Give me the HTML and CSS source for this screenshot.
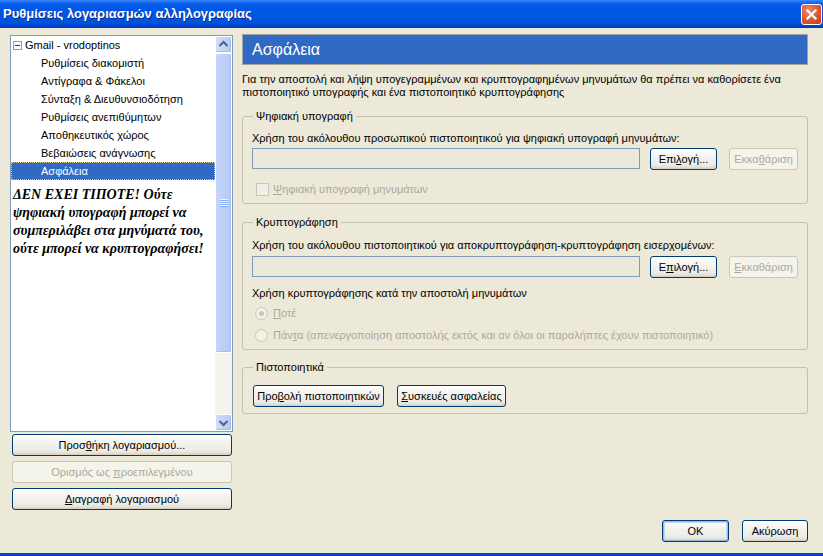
FILE: index.html
```html
<!DOCTYPE html>
<html lang="el">
<head>
<meta charset="utf-8">
<title>Ρυθμίσεις λογαριασμών αλληλογραφίας</title>
<link rel="stylesheet" href="styles.css">
</head>
<body>
<div class="window">
  <div class="titlebar">
    <span class="title">Ρυθμίσεις λογαριασμών αλληλογραφίας</span>
    <span class="close-btn">
      <svg width="19" height="19" viewBox="0 0 19 19"><path d="M5.5 5.5 L13.5 13.5 M13.5 5.5 L5.5 13.5" stroke="#fff" stroke-width="2.2" stroke-linecap="square"/></svg>
    </span>
  </div>
  <div class="content">
    <div class="main">
      <div class="leftcol">
        <div class="tree">
          <div class="tree-list">
            <div class="row root"><span class="expander"><span class="minus"></span></span>Gmail - vrodoptinos</div>
            <div class="row child">Ρυθμίσεις διακομιστή</div>
            <div class="row child">Αντίγραφα &amp; Φάκελοι</div>
            <div class="row child">Σύνταξη &amp; Διευθυνσιοδότηση</div>
            <div class="row child">Ρυθμίσεις ανεπιθύμητων</div>
            <div class="row child">Αποθηκευτικός χώρος</div>
            <div class="row child">Βεβαιώσεις ανάγνωσης</div>
            <div class="row child selected">Ασφάλεια</div>
            <p class="note">ΔΕΝ ΕΧΕΙ ΤΙΠΟΤΕ! Ούτε<br>ψηφιακή υπογραφή μπορεί να<br>συμπεριλάβει στα μηνύματά του,<br>ούτε μπορεί να κρυπτογραφήσει!</p>
          </div>
          <div class="scrollbar">
            <div class="sb-btn"><svg width="15" height="15" viewBox="0 0 15 15"><path d="M3.5 9 L7.5 5 L11.5 9" fill="none" stroke="#4D6185" stroke-width="2"/></svg></div>
            <div class="sb-thumb"><span class="grip"></span></div>
            <div class="sb-track"></div>
            <div class="sb-btn"><svg width="15" height="15" viewBox="0 0 15 15"><path d="M3.5 6 L7.5 10 L11.5 6" fill="none" stroke="#4D6185" stroke-width="2"/></svg></div>
          </div>
        </div>
        <button class="btn side">Προσ<u>θ</u>ήκη λογαριασμού...</button>
        <button class="btn side" disabled>Ορισμός ως <u>π</u>ροεπιλεγμένου</button>
        <button class="btn side"><u>Δ</u>ιαγραφή λογαριασμού</button>
      </div>
      <div class="rightcol">
        <div class="pane-header">Ασφάλεια</div>
        <p class="desc">Για την αποστολή και λήψη υπογεγραμμένων και κρυπτογραφημένων μηνυμάτων θα πρέπει να καθορίσετε ένα<br>πιστοποιητικό υπογραφής και ένα πιστοποιητικό κρυπτογράφησης</p>

        <fieldset class="group g1">
          <legend>Ψηφιακή υπογραφή</legend>
          <div class="label">Χρήση του ακόλουθου προσωπικού πιστοποιητικού για ψηφιακή υπογραφή μηνυμάτων:</div>
          <div class="cert-row">
            <div class="field"></div>
            <button class="btn pick">Επι<u>λ</u>ογή...</button>
            <button class="btn clear" disabled>Εκκα<u>θ</u>άριση</button>
          </div>
          <div class="opt-row check-row"><span class="checkbox"></span><span class="dis"><u>Ψ</u>ηφιακή υπογραφή μηνυμάτων</span></div>
        </fieldset>

        <fieldset class="group g2">
          <legend>Κρυπτογράφηση</legend>
          <div class="label">Χρήση του ακόλουθου πιστοποιητικού για αποκρυπτογράφηση-κρυπτογράφηση εισερχομένων:</div>
          <div class="cert-row">
            <div class="field"></div>
            <button class="btn pick">Ε<u>π</u>ιλογή...</button>
            <button class="btn clear" disabled><u>Ε</u>κκαθάριση</button>
          </div>
          <div class="label sub">Χρήση κρυπτογράφησης κατά την αποστολή μηνυμάτων</div>
          <div class="opt-row radio-row first"><span class="radio checked"></span><span class="dis"><u>Π</u>οτέ</span></div>
          <div class="opt-row radio-row second"><span class="radio"></span><span class="dis">Πάν<u>τ</u>α (απενεργοποίηση αποστολής εκτός και αν όλοι οι παραλήπτες έχουν πιστοποιητικό)</span></div>
        </fieldset>

        <fieldset class="group g3">
          <legend>Πιστοποιητικά</legend>
          <div class="cert-buttons">
            <button class="btn view">Προ<u>β</u>ολή πιστοποιητικών</button>
            <button class="btn devices"><u>Σ</u>υσκευές ασφαλείας</button>
          </div>
        </fieldset>
      </div>
    </div>
    <div class="footer">
      <button class="btn dlg default">OK</button>
      <button class="btn dlg">Ακύρωση</button>
    </div>
  </div>
</div>
</body>
</html>
```

FILE: styles.css
```css
* { box-sizing: border-box; }
html, body { margin: 0; padding: 0; }
body {
  width: 823px;
  height: 556px;
  overflow: hidden;
  background: #ECE9D8;
  font-family: "Liberation Sans", Arial, sans-serif;
  font-size: 11px;
  color: #000;
}
.window {
  width: 823px;
  height: 556px;
  display: flex;
  flex-direction: column;
  border-bottom: 3px solid #0B3FD0;
}
.titlebar {
  height: 28px;
  flex: none;
  display: flex;
  align-items: center;
  justify-content: space-between;
  padding: 0 1px 0 3px;
  background: linear-gradient(to bottom, #3D8FFF 0px, #1D6CF3 2px, #0A5EEA 4px, #0058E6 8px, #0056E4 18px, #0051DC 23px, #0044C6 26px, #003AB2 28px);
}
.title {
  color: #fff;
  font-weight: bold;
  font-size: 13px;
  text-shadow: 1px 1px 0 #0A2A8E;
  padding-bottom: 1px;
}
.close-btn {
  width: 21px;
  height: 21px;
  border: 1px solid #fff;
  border-radius: 3px;
  background: radial-gradient(circle at 35% 30%, #F08B6C 0%, #E25C3B 45%, #C63A18 100%);
  display: flex;
  align-items: center;
  justify-content: center;
  margin-top: 1px;
}
.content {
  flex: 1;
  display: flex;
  flex-direction: column;
  padding: 6px 15px 11px 10px;
}
.main {
  flex: 1;
  display: flex;
  gap: 9px;
}
.leftcol {
  width: 223px;
  flex: none;
  display: flex;
  flex-direction: column;
}
.tree {
  margin-top: 1px;
  height: 397px;
  border: 1px solid #7F9DB9;
  background: #fff;
  display: flex;
}
.tree-list {
  flex: 1;
  position: relative;
  overflow: visible;
  z-index: 1;
}
.row {
  height: 18px;
  line-height: 18px;
  white-space: nowrap;
}
.root {
  display: flex;
  align-items: center;
}
.expander {
  width: 9px;
  height: 9px;
  border: 1px solid #8C9DB8;
  margin: 0 3px 0 2px;
  background: #fff;
  display: flex;
  align-items: center;
  justify-content: center;
}
.minus {
  width: 5px;
  height: 1px;
  background: #1F2F5C;
}
.child { padding-left: 30px; }
.selected {
  background: #316AC5;
  color: #fff;
  outline: 1px dotted #D8C890;
  outline-offset: -1px;
}
.note {
  margin: 6px 0 0 0;
  padding-left: 2px;
  font-family: "Liberation Serif", "Times New Roman", serif;
  font-weight: bold;
  font-style: italic;
  font-size: 14px;
  line-height: 18px;
  white-space: nowrap;
}
.scrollbar {
  width: 17px;
  flex: none;
  display: flex;
  flex-direction: column;
  background: #F4F3EE;
}
.sb-btn {
  height: 17px;
  flex: none;
  border: 1px solid #fff;
  border-radius: 2px;
  background: linear-gradient(to right, #D0DDFC, #B7CAF7);
  box-shadow: inset -1px -1px 0 #A4BCEE;
  display: flex;
  align-items: center;
  justify-content: center;
}
.sb-thumb {
  height: 300px;
  flex: none;
  border: 1px solid #fff;
  border-radius: 2px;
  background: linear-gradient(to right, #C6D6FC, #B4C8F7);
  box-shadow: inset -1px -1px 0 #A8BFF0;
  display: flex;
  align-items: center;
  justify-content: center;
}
.grip {
  width: 8px;
  height: 8px;
  background: repeating-linear-gradient(to bottom, #EEF4FE 0px, #EEF4FE 1px, #8CB0F8 1px, #8CB0F8 2px);
}
.sb-track { flex: 1; }

.btn {
  font-family: "Liberation Sans", Arial, sans-serif;
  font-size: 11px;
  color: #000;
  height: 22px;
  padding: 0;
  border: 1px solid #003C74;
  border-radius: 3px;
  background: linear-gradient(to bottom, #FFFFFF 0%, #F5F5F1 30%, #ECEBE5 80%, #D8D3C8 100%);
  box-shadow: inset 0 -1px 0 #D6D0C5;
  white-space: nowrap;
}
.btn:disabled {
  color: #ACA899;
  border-color: #C9C7BA;
  background: #F5F4EA;
  box-shadow: none;
}
.btn.default {
  box-shadow: inset 0 0 0 1px #98B8EA, inset 0 0 0 2px #C3D8F5;
}
.side {
  width: 220px;
  margin: 5px 0 0 2px;
}
.side:first-of-type { margin-top: 2px; }

.rightcol {
  flex: 1;
  display: flex;
  flex-direction: column;
}
.pane-header {
  height: 31px;
  border: 1px solid #A5A29A;
  background: #316AC5;
  color: #fff;
  font-size: 16px;
  line-height: 29px;
  padding-left: 9px;
}
.desc {
  margin: 8px 0 0 0;
  line-height: 13px;
  white-space: nowrap;
}
.group {
  margin: 11px 0 0 0;
  border: 1px solid #C3C0B0;
  border-radius: 3px;
  padding: 9px 9px 7px 9px;
  min-width: 0;
}
.group legend {
  padding: 0 3px;
  margin-left: 1px;
  line-height: 13px;
}
.g2 { margin-top: 12px; padding-top: 10px; }
.g3 { padding-bottom: 6px; padding-top: 11px; }
.label {
  line-height: 13px;
  white-space: nowrap;
}
.cert-row {
  display: flex;
  align-items: flex-start;
  margin-top: 3px;
}
.g2 .cert-row { margin-top: 4px; }
.field {
  flex: 1;
  height: 21px;
  border: 1px solid #7F9DB9;
  background: #ECE9D8;
}
.pick { width: 67px; margin-left: 10px; }
.clear { width: 69px; margin-left: 12px; }
.opt-row {
  display: flex;
  align-items: center;
  height: 13px;
  line-height: 13px;
  white-space: nowrap;
}
.check-row { margin-top: 13px; }
.dis { color: #ACA899; }
.checkbox {
  width: 13px;
  height: 13px;
  border: 1px solid #CAC8BB;
  background: #F0EFE6;
  margin: 0 4px 0 4px;
}
.sub { margin-top: 9px; }
.radio-row.first { margin-top: 7px; }
.radio-row.second { margin-top: 9px; }
.radio {
  width: 13px;
  height: 13px;
  border: 1px solid #CAC8BB;
  border-radius: 50%;
  background: #F2F1E8;
  margin: 0 5px 0 3px;
  display: flex;
  align-items: center;
  justify-content: center;
}
.radio.checked::after {
  content: "";
  width: 5px;
  height: 5px;
  border-radius: 50%;
  background: #C9C7BA;
}
.cert-buttons {
  display: flex;
  gap: 13px;
}
.view { width: 131px; margin-left: 1px; }
.devices { width: 109px; }

.footer {
  height: 22px;
  flex: none;
  display: flex;
  justify-content: flex-end;
  gap: 13px;
}
.dlg { width: 67px; }
.footer .dlg:last-child { width: 66px; }
```
